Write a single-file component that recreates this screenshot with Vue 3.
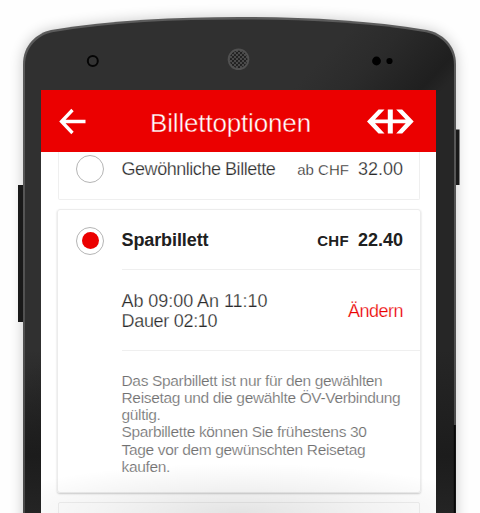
<script setup>
const description = [
  'Das Sparbillett ist nur für den gewählten',
  'Reisetag und die gewählte ÖV-Verbindung',
  'gültig.',
  'Sparbillette können Sie frühestens 30',
  'Tage vor dem gewünschten Reisetag',
  'kaufen.',
]
</script>

<template>
  <main class="stage">
    <svg class="phone" viewBox="0 0 480 513" aria-hidden="true">
      <defs>
        <linearGradient id="body" gradientUnits="userSpaceOnUse" x1="330" y1="50" x2="410" y2="125">
          <stop offset="0" stop-color="#303030" />
          <stop offset="0.35" stop-color="#2b2b2b" />
          <stop offset="0.85" stop-color="#1f1f1f" />
          <stop offset="1" stop-color="#262626" />
        </linearGradient>
        <linearGradient id="foot" x1="0" y1="0" x2="0" y2="1">
          <stop offset="0" stop-color="#1c1c1c" stop-opacity="0" />
          <stop offset="0.65" stop-color="#1c1c1c" />
          <stop offset="1" stop-color="#242424" />
        </linearGradient>
        <linearGradient id="rim" x1="0" y1="0" x2="0" y2="1">
          <stop offset="0" stop-color="#5c5c5c" />
          <stop offset="0.6" stop-color="#505050" />
          <stop offset="1" stop-color="#484848" />
        </linearGradient>
        <pattern id="mesh" width="4" height="4" patternUnits="userSpaceOnUse">
          <rect width="4" height="4" fill="#4a4a4a" />
          <circle cx="1" cy="1" r="1.100" fill="#1c1c1c" />
          <circle cx="3" cy="3" r="1.100" fill="#1c1c1c" />
        </pattern>
        <filter id="soft" x="-20%" y="-20%" width="140%" height="140%">
          <feGaussianBlur stdDeviation="7" />
        </filter>
      </defs>
      <path d="M23 530V64C23 45 37 33 51 30.500C112 20 175 17.500 239 17.500S366 20 427 30.500C442 33 456 45 456 64V530Z" fill="#000" opacity="0.22" filter="url(#soft)" />
      <rect x="18" y="185" width="6" height="137" fill="#191919" />
      <rect x="455" y="129.500" width="4.500" height="55.500" fill="#191919" />
      <path d="M23 530V64C23 45 37 33 51 30C112 20 175 17 239 17S366 20 427 30C442 33 456 45 456 64V530Z" fill="url(#rim)" />
      <path d="M25 530V65C25 47 38 35.300 52 32.300C112 22.100 175 19.500 239 19.500S366 22.100 426 32.300C441 35.300 454 47 454 65V530Z" fill="url(#body)" />
      <rect x="25" y="350" width="16" height="163" fill="url(#foot)" />
      <rect x="435" y="350" width="19" height="163" fill="url(#foot)" />
      <path d="M454.800 425V513" stroke="#080808" stroke-width="2" />
      <circle cx="92.800" cy="61" r="5" fill="#333" stroke="#050505" stroke-width="2" />
      <circle cx="238.500" cy="59.300" r="10.800" fill="#505050" />
      <circle cx="238.500" cy="59.300" r="8.900" fill="url(#mesh)" />
      <circle cx="376.500" cy="61" r="4.400" fill="#000" />
      <circle cx="389.500" cy="61" r="3.100" fill="#000" />
    </svg>

    <section class="screen">
      <header class="bar">
        <svg class="back" viewBox="0 0 28 28">
          <path d="M14.500 2L3.500 13.500L14.500 25M3.500 13.500H27.500" fill="none" stroke="#fff" stroke-width="3.300" />
        </svg>
        <h1>Billettoptionen</h1>
        <svg class="logo" viewBox="0 0 47 25">
          <path d="M0 12.500L11.500 0.500H17.500L8 10.500H20.800V0.500H25.800V10.500H38.700L29.200 0.500H35.200L46.700 12.500L35.200 24.500H29.200L38.700 14.200H25.800V24.500H20.800V14.200H8L17.500 24.500H11.500Z" fill="#fff" />
        </svg>
      </header>

      <div class="list">
        <article class="card plain">
          <span class="radio"></span>
          <span class="name">Gewöhnliche Billette</span>
          <span class="price"><small>ab CHF</small><span>32.00</span></span>
        </article>

        <article class="card active">
          <div class="head">
            <span class="radio on"></span>
            <b class="name">Sparbillett</b>
            <b class="price"><small>CHF</small><span>22.40</span></b>
          </div>
          <div class="trip">
            <div class="times">
              <div>Ab 09:00 An 11:10</div>
              <div class="duration">Dauer 02:10</div>
            </div>
            <a class="change">Ändern</a>
          </div>
          <div class="info">
            <div v-for="line in description" :key="line">{{ line }}</div>
          </div>
        </article>

        <article class="card next"></article>
      </div>
      <div class="fade"></div>
    </section>
  </main>
</template>

<style>
body {
  background: #fefefe;
  overflow: hidden;
}
</style>

<style scoped>
* {
  box-sizing: border-box;
}
.stage {
  position: relative;
  width: 480px;
  height: 513px;
  padding: 90px 44px 0 41px;
  overflow: hidden;
  font-family: "Liberation Sans", Arial, sans-serif;
  font-size: 18px;
  color: #2b2b2b;
  white-space: nowrap;
}
.phone {
  position: absolute;
  inset: 0;
  width: 480px;
  height: 513px;
}
.screen {
  position: relative;
  display: flex;
  flex-direction: column;
  height: 423px;
  overflow: hidden;
  background: #fff;
}
.bar {
  flex: none;
  display: flex;
  align-items: center;
  height: 62px;
  padding: 1px 22px 0 17px;
  background: #eb0000;
  color: #fff;
}
.back {
  width: 28px;
  height: 28px;
}
.bar h1 {
  flex: 1;
  margin: 3px 0 0 64px;
  font-size: 26px;
  font-weight: 400;
  line-height: 30px;
  letter-spacing: -0.16px;
  -webkit-text-stroke: 0.4px #eb0000;
}
.logo {
  width: 47px;
  height: 25px;
}
.list {
  display: flex;
  flex-direction: column;
  align-items: center;
  gap: 9px;
  padding-left: 1px;
}
.card {
  flex: none;
  width: 362px;
  border: 1px solid #efefef;
  border-radius: 2px;
}
.plain {
  display: flex;
  align-items: center;
  height: 48px;
  padding: 0 16px 13px 17px;
  border-top: 0;
  border-radius: 0 0 2px 2px;
}
.active {
  width: 364px;
  height: 284px;
  border-radius: 3px;
  border-color: #ececec;
  box-shadow: 0 1px 2px rgba(0, 0, 0, 0.2);
}
.next {
  height: 40px;
}
.radio {
  flex: none;
  display: flex;
  align-items: center;
  justify-content: center;
  width: 28px;
  height: 28px;
  border: 1px solid #b5b5b5;
  border-radius: 50%;
}
.radio.on::after {
  content: "";
  width: 17px;
  height: 17px;
  border-radius: 50%;
  background: #eb0000;
}
.name {
  flex: 1;
  margin-left: 17.500px;
}
.plain .name {
  letter-spacing: -0.46px;
}
.plain .name,
.plain .price,
.times,
.change {
  -webkit-text-stroke: 0.25px #fff;
}
.price {
  display: flex;
  align-items: baseline;
  gap: 9px;
}
.price small {
  font-size: 15px;
}
.head {
  display: flex;
  align-items: center;
  height: 59px;
  padding: 2px 17px 0 18px;
  color: #202020;
}
.head .name {
  letter-spacing: -0.1px;
}
.head .price small {
  letter-spacing: 0.3px;
}
.trip {
  display: flex;
  align-items: center;
  justify-content: space-between;
  height: 82px;
  margin-left: 63.500px;
  padding: 2px 17px 0 0;
  border: solid #efefef;
  border-width: 1px 0;
}
.times {
  line-height: 20px;
  letter-spacing: -0.05px;
}
.duration {
  letter-spacing: -0.3px;
}
.change {
  color: #eb0000;
  letter-spacing: -0.5px;
}
.info {
  margin-left: 63.500px;
  padding-top: 21px;
  font-size: 15.5px;
  line-height: 17.15px;
  letter-spacing: -0.34px;
  color: #707070;
  -webkit-text-stroke: 0.2px #fff;
}
.fade {
  position: absolute;
  inset: auto 0 0;
  height: 60px;
  background: radial-gradient(ellipse 260px 50px at 50% 100%, rgba(0, 0, 0, 0.11), rgba(0, 0, 0, 0.05) 50%, rgba(0, 0, 0, 0));
}
</style>
